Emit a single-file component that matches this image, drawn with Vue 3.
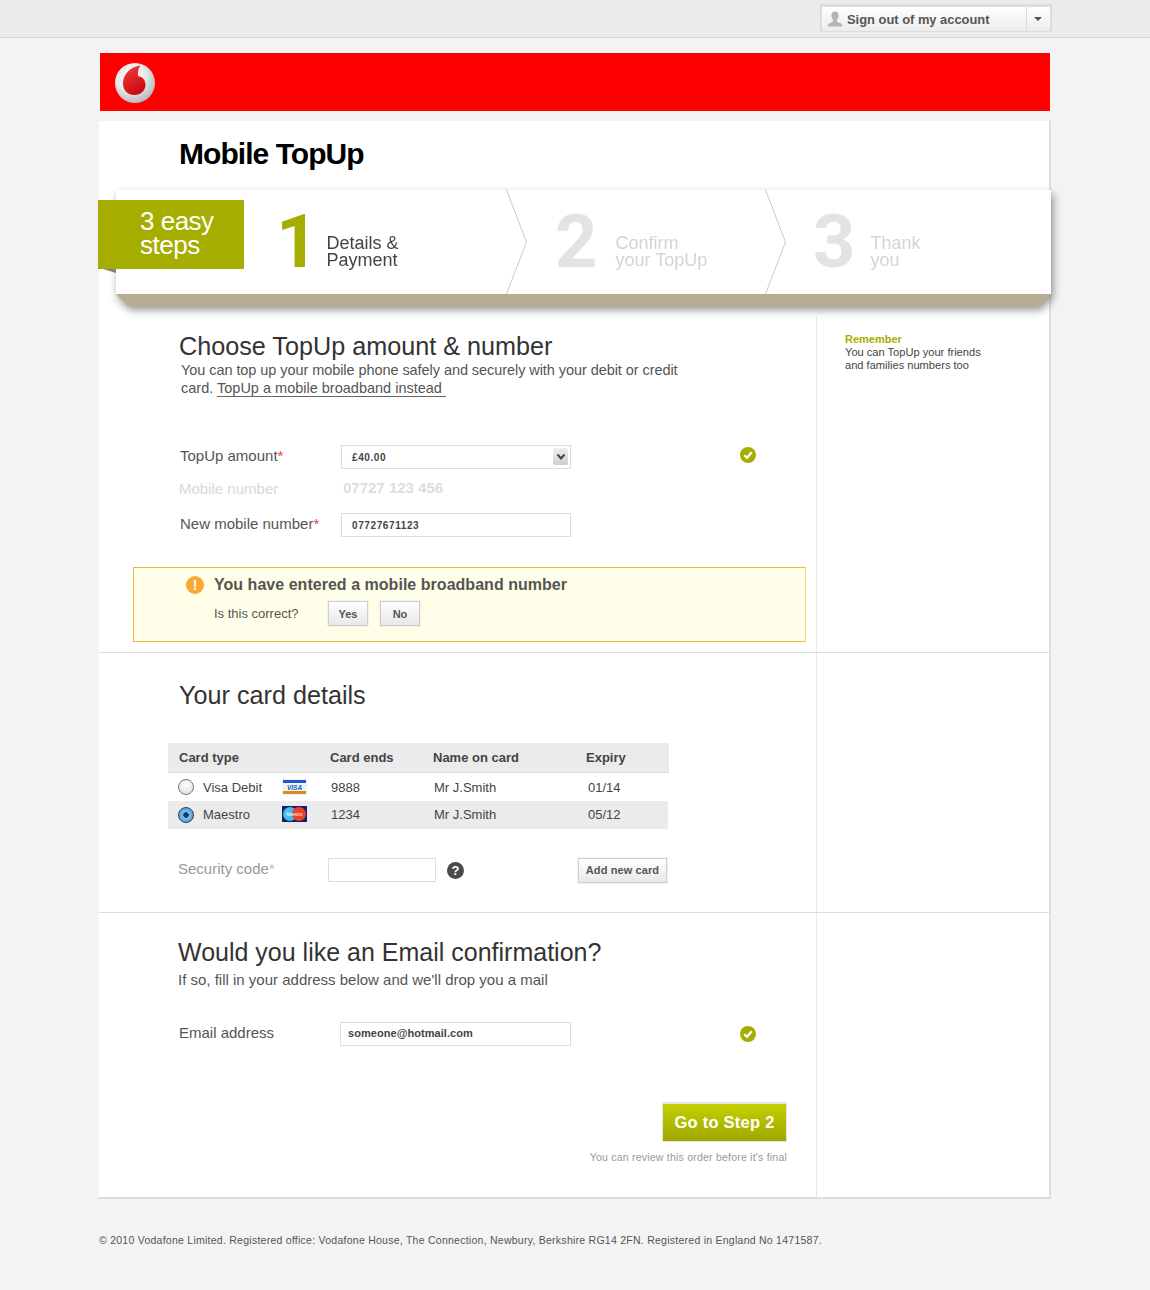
<template>
  <div class="page">
    <div class="topbar">
      <div class="account">
        <svg class="person" width="16" height="16" viewBox="0 0 16 16">
          <path d="M8 0.5c2.3 0 3.6 1.7 3.6 4 0 1.7-.7 3.3-1.700 4.2v1.300c0 .8 1.200 1.200 2.700 1.800 1.500.6 2.600 1.200 2.900 3.700H.5c.3-2.500 1.400-3.100 2.900-3.700 1.500-.6 2.700-1 2.700-1.800V8.700C5.100 7.800 4.400 6.200 4.400 4.500c0-2.300 1.300-4 3.600-4z" fill="#b4b4b4" />
        </svg>
        <span class="account-label">Sign out of my account</span>
        <span class="account-arrow"><i></i></span>
      </div>
    </div>

    <div class="brand">
      <svg width="40" height="40" viewBox="0 0 40 40">
        <defs>
          <radialGradient id="disc" cx="40%" cy="35%" r="68%">
            <stop offset="0" stop-color="#ffffff" />
            <stop offset="0.55" stop-color="#e8e8ea" />
            <stop offset="1" stop-color="#b4b5bb" />
          </radialGradient>
          <linearGradient id="mark" x1="0.2" y1="0" x2="0.7" y2="1">
            <stop offset="0" stop-color="#f03a3a" />
            <stop offset="1" stop-color="#c8060f" />
          </linearGradient>
        </defs>
        <circle cx="20" cy="20" r="20" fill="url(#disc)" />
        <path d="M25.5 2.600C15.500 3.800 8 11.500 8 20.500 8 27.500 13 32 19.500 32c6.300 0 11-4.600 11-10.300 0-4.800-3.100-8-7.500-8.700-.5-4.200.5-7.900 2.500-10.400z" fill="url(#mark)" />
      </svg>
    </div>

    <div class="card">
      <h1 class="title">Mobile TopUp</h1>

      <div class="stepper">
        <div class="stepper-body">
          <div class="step-face">
            <div v-for="s in steps" :key="s.num" class="step" :class="[s.cls, { active: s.active }]">
              <span class="step-num">{{ s.num }}</span>
              <span class="step-text">{{ s.line1 }}<br />{{ s.line2 }}</span>
              <svg v-if="s.chevron" class="chevron" width="22" height="104" viewBox="0 0 22 104">
                <path d="M0.5 0L20.5 52L0.5 104" fill="none" stroke="#c9c9c9" />
              </svg>
            </div>
          </div>
          <div class="step-depth"></div>
        </div>
        <div class="flag-fold"></div>
        <div class="flag">3 easy<br />steps</div>
      </div>

      <section class="row first">
        <div class="main">
          <h2 class="heading">Choose TopUp amount &amp; number</h2>
          <p class="intro">
            <span class="intro-line">You can top up your mobile phone safely and securely with your debit or credit</span><br />
            card. <a class="link">TopUp a mobile broadband instead</a>
          </p>

          <div class="field f-amount">
            <label>TopUp amount<em>*</em></label>
            <div class="input select">
              £40.00
              <span class="select-btn">
                <svg width="10" height="8" viewBox="0 0 10 8"><path d="M1.500 1.500L5 5.500L8.500 1.500" fill="none" stroke="#444" stroke-width="2" /></svg>
              </span>
            </div>
            <svg class="tick" width="16" height="16" viewBox="0 0 16 16">
              <circle cx="8" cy="8" r="8" fill="#a5ae00" />
              <path d="M4.300 8.300L7 10.800L11.700 5.300" fill="none" stroke="#fff" stroke-width="2.200" />
            </svg>
          </div>
          <div class="field f-mobile">
            <label>Mobile number</label>
            <span class="static">07727 123 456</span>
          </div>
          <div class="field f-new">
            <label>New mobile number<em>*</em></label>
            <div class="input">07727671123</div>
          </div>

          <div class="alert">
            <div class="alert-head">
              <span class="alert-icon">!</span>
              <strong>You have entered a mobile broadband number</strong>
            </div>
            <div class="alert-body">
              <span class="alert-q">Is this correct?</span>
              <button class="btn">Yes</button>
              <button class="btn">No</button>
            </div>
          </div>
        </div>
        <aside class="side">
          <div class="side-title">Remember</div>
          <div class="side-text">You can TopUp your friends<br />and families numbers too</div>
        </aside>
      </section>

      <section class="row second">
        <div class="main">
          <h2 class="heading">Your card details</h2>
          <div class="cards">
            <div class="cards-row cards-head">
              <span>Card type</span><span>Card ends</span><span>Name on card</span><span>Expiry</span>
            </div>
            <div v-for="c in cards" :key="c.ends" class="cards-row cards-item" :class="{ picked: c.picked }">
              <span class="card-type">
                <i class="radio" :class="{ on: c.picked }"></i>
                <span class="card-name">{{ c.type }}</span>
                <svg v-if="c.logo === 'visa'" width="25" height="16" viewBox="0 0 25 16">
                  <rect width="25" height="16" fill="#eef2fb" />
                  <rect x="1" y="1" width="23" height="3" fill="#2357c5" />
                  <rect x="1" y="12" width="23" height="3" fill="#dd8c12" />
                  <text x="12.5" y="10.5" class="visa-text">VISA</text>
                </svg>
                <svg v-else width="25" height="16" viewBox="0 0 25 16">
                  <rect width="25" height="16" fill="#1c1a6b" />
                  <circle cx="8" cy="8" r="7" fill="#3fc0ea" />
                  <circle cx="17" cy="8" r="7" fill="#ec4226" />
                  <text x="12.5" y="9.5" class="maestro-text">Maestro</text>
                </svg>
              </span>
              <span class="c-ends">{{ c.ends }}</span>
              <span class="c-name">{{ c.name }}</span>
              <span class="c-exp">{{ c.expiry }}</span>
            </div>
          </div>
          <div class="security">
            <label>Security code<em>*</em></label>
            <div class="input code"></div>
            <span class="help">?</span>
            <button class="btn add">Add new card</button>
          </div>
        </div>
        <aside class="side"></aside>
      </section>

      <section class="row third">
        <div class="main">
          <h2 class="heading">Would you like an Email confirmation?</h2>
          <p class="sub">If so, fill in your address below and we'll drop you a mail</p>
          <div class="field f-email">
            <label>Email address</label>
            <div class="input email">someone@hotmail.com</div>
            <svg class="tick" width="16" height="16" viewBox="0 0 16 16">
              <circle cx="8" cy="8" r="8" fill="#a5ae00" />
              <path d="M4.300 8.300L7 10.800L11.700 5.300" fill="none" stroke="#fff" stroke-width="2.200" />
            </svg>
          </div>
          <div class="submit">
            <button class="go">Go to Step 2</button>
            <div class="note">You can review this order before it's final</div>
          </div>
        </div>
        <aside class="side"></aside>
      </section>
    </div>

    <footer class="foot">© 2010 Vodafone Limited. Registered office: Vodafone House, The Connection, Newbury, Berkshire RG14 2FN. Registered in England No 1471587.</footer>
  </div>
</template>

<script setup>
const steps = [
  { num: '1', line1: 'Details &', line2: 'Payment', cls: 's1', active: true, chevron: true },
  { num: '2', line1: 'Confirm', line2: 'your TopUp', cls: 's2', chevron: true },
  { num: '3', line1: 'Thank', line2: 'you', cls: 's3' }
]

const cards = [
  { type: 'Visa Debit', logo: 'visa', ends: '9888', name: 'Mr J.Smith', expiry: '01/14' },
  { type: 'Maestro', logo: 'maestro', ends: '1234', name: 'Mr J.Smith', expiry: '05/12', picked: true }
]
</script>

<style>
html, body { background: #f3f3f3; }
</style>

<style scoped>
.page {
  width: 1150px;
  height: 1290px;
  overflow: hidden;
  font-family: "Liberation Sans", Arial, sans-serif;
  color: #555;
}
.topbar {
  height: 37px;
  background: #ebebeb;
  border-bottom: 1px solid #d6d6d6;
  position: relative;
}
.account {
  position: absolute;
  left: 820px;
  top: 4px;
  width: 232px;
  height: 28px;
  box-sizing: border-box;
  border: 2px solid #dcdcdc;
  border-top-width: 3px;
  border-bottom-width: 1px;
  display: flex;
  align-items: center;
  background: linear-gradient(#ffffff, #ececec);
}
.person { margin-left: 5px; }
.account-label {
  margin-left: 4px;
  font-size: 12.9px;
  font-weight: bold;
  color: #555;
  flex: 1;
}
.account-arrow {
  width: 24px;
  height: 100%;
  padding-right: 2px;
  box-sizing: border-box;
  border-left: 1px solid #dcdcdc;
  display: flex;
  align-items: center;
  justify-content: center;
}
.account-arrow i {
  width: 0;
  height: 0;
  border: 4px solid transparent;
  border-top: 4px solid #555;
  border-bottom: 0;
}
.brand {
  margin: 15px 0 0 100px;
  width: 950px;
  height: 58px;
  background: #ff0000;
  box-sizing: border-box;
  padding: 10px 0 0 15px;
}
.brand svg { display: block; }
.card {
  margin: 10px 0 0 99px;
  width: 952px;
  box-sizing: border-box;
  background: #fff;
  border-right: 2px solid #dedede;
  border-bottom: 2px solid #dedede;
  padding-top: 15px;
}
.title {
  margin: 0 0 0 80px;
  font-size: 30px;
  line-height: 36px;
  font-weight: bold;
  letter-spacing: -0.95px;
  color: #000;
}
.stepper {
  position: relative;
  margin: 18px 0 0 17px;
  width: 935px;
}
.stepper-body { filter: drop-shadow(2px 4px 4px rgba(0, 0, 0, 0.42)); }
.step-face {
  display: flex;
  height: 104px;
  background: #fff;
}
.step-depth {
  height: 12px;
  background: #b8ad93;
  clip-path: polygon(0 0, 100% 0, calc(100% - 12px) 100%, 12px 100%);
}
.flag {
  position: absolute;
  z-index: 2;
  left: -18px;
  top: 10px;
  width: 146px;
  height: 69px;
  box-sizing: border-box;
  padding: 9px 0 0 42px;
  background: #a5ae00;
  color: #fff;
  font-size: 26px;
  line-height: 24px;
  letter-spacing: -0.5px;
}
.flag-fold {
  position: absolute;
  left: -13px;
  top: 79px;
  width: 13px;
  height: 4px;
  background: #8a8170;
  clip-path: polygon(0 0, 100% 0, 100% 100%);
}
.step {
  position: relative;
  display: flex;
  align-items: flex-end;
  padding-bottom: 26px;
  box-sizing: border-box;
  color: #d4d4d4;
}
.s1 { width: 390px; padding-left: 160px; }
.s2 { width: 259px; padding-left: 49px; }
.s3 { width: 286px; padding-left: 48px; }
.step-num {
  font-family: Roboto, "Liberation Sans", sans-serif;
  font-size: 74px;
  line-height: 53px;
  height: 53px;
  font-weight: bold;
  color: #e2e3e5;
}
.active .step-num { color: #a5ae00; }
.step-text {
  font-size: 18px;
  line-height: 17px;
  margin-left: 18px;
  margin-bottom: -1px;
}
.s1 .step-text { margin-left: 8px; }
.s3 .step-text { margin-left: 15px; }
.active .step-text { color: #444; }
.chevron {
  position: absolute;
  left: 100%;
  top: 0;
  z-index: 1;
}
.row {
  display: grid;
  grid-template-columns: 717px 1fr;
  border-bottom: 1px solid #dcdcdc;
  box-sizing: border-box;
}
.row.first { margin-top: 11px; height: 336px; }
.row.second { height: 260px; }
.row.third { border-bottom: 0; height: 284px; }
.side { border-left: 1px solid #e8e8e8; padding: 16px 0 0 28px; }
.side-title { font-size: 11px; line-height: 13px; font-weight: bold; color: #a5ae00; }
.side-text { font-size: 11.1px; line-height: 13px; color: #444; }
.heading {
  margin: 0;
  font-size: 25.2px;
  line-height: 30px;
  font-weight: normal;
  color: #333;
}
.first .main { padding: 14px 0 0 0; }
.first .heading { margin-left: 80px; }
.intro {
  margin: 0 0 0 82px;
  font-size: 14.5px;
  line-height: 18px;
  color: #555;
}
.intro-line { letter-spacing: -0.065px; }
.link {
  color: #555;
  border-bottom: 1px solid #666;
  padding-right: 4px;
}
.field { display: flex; align-items: center; position: relative; }
.field label {
  width: 161px;
  margin-left: 81px;
  flex: none;
  font-size: 15px;
  color: #555;
  margin-top: -4px;
}
em { color: #f23b3b; font-style: normal; }
.input {
  width: 230px;
  height: 24px;
  box-sizing: border-box;
  border: 1px solid #dcdcdc;
  background: #fff;
  padding-left: 10px;
  font-size: 10px;
  line-height: 24px;
  font-weight: bold;
  color: #444;
  letter-spacing: 0.6px;
  position: relative;
}
.select-btn {
  position: absolute;
  right: 2px;
  top: 2px;
  width: 15px;
  height: 17px;
  background: linear-gradient(#efefef, #cfcfcf);
  border-radius: 2px;
  display: flex;
  align-items: center;
  justify-content: center;
}
.tick { margin-left: 169px; }
.f-amount { margin-top: 48px; }
.f-amount .tick { margin-top: -4px; }
.f-mobile { margin-top: 10px; height: 19px; }
.f-mobile label { color: #d8d8d8; margin-left: 80px; width: 164px; margin-top: 0; }
.static { font-size: 15px; font-weight: bold; color: #dddddd; margin-top: -2px; }
.f-new { margin-top: 15px; }
.alert {
  margin: 30px 0 0 34px;
  width: 673px;
  height: 75px;
  box-sizing: border-box;
  background: #ffffe9;
  border: 1px solid #f4b23e;
  border-right-color: #fbd385;
  padding: 7px 0 0 52px;
}
.alert-head {
  display: flex;
  align-items: center;
  font-size: 16px;
  line-height: 19px;
  letter-spacing: 0.03px;
  color: #555;
}
.alert-icon {
  width: 18px;
  height: 18px;
  border-radius: 50%;
  background: #f9a92f;
  color: #fff;
  font-size: 14px;
  font-weight: bold;
  line-height: 18px;
  text-align: center;
  margin-right: 10px;
}
.alert-body { display: flex; align-items: center; margin: 7px 0 0 28px; }
.alert-q { font-size: 13px; color: #555; width: 114px; }
.btn {
  height: 25px;
  padding: 0;
  background: linear-gradient(#ffffff, #e8e8e8);
  border: 1px solid #cfcfcf;
  outline: 1px solid rgba(0, 0, 0, 0.05);
  font-family: inherit;
  font-size: 11px;
  font-weight: bold;
  color: #555;
}
.alert .btn { width: 40px; margin-right: 12px; }
.second .main { padding-top: 27px; }
.second .heading { margin-left: 80px; }
.cards { margin: 33px 0 0 69px; width: 501px; }
.cards-row {
  display: grid;
  grid-template-columns: 151px 103px 153px 1fr;
  align-items: center;
  padding-left: 11px;
}
.cards-head {
  height: 30px;
  box-sizing: border-box;
  background: #ebebeb;
  border-bottom: 1px solid #dcdcdc;
  font-size: 13px;
  font-weight: bold;
  color: #444;
}
.cards-item { height: 28px; font-size: 13px; color: #444; }
.cards-item.picked { background: #ebebeb; width: 489px; }
.picked .card-name, .picked .c-ends, .picked .c-name, .picked .c-exp { margin-bottom: 2px; }
.picked svg { margin-bottom: 2px; }
.card-type { display: flex; align-items: center; margin-left: -1px; }
.card-type svg { display: block; }
.radio {
  width: 14px;
  height: 14px;
  border-radius: 50%;
  border: 1px solid #777;
  background: radial-gradient(circle at 50% 35%, #fff, #d8d8d8);
  margin-right: 9px;
  flex: none;
}
.radio.on {
  border-color: #1f3f66;
  background: radial-gradient(circle, #173a5c 0 2.5px, #7cc0ee 3px, #3d8fd0 100%);
}
.card-name { width: 79px; flex: none; }
.c-ends { margin-left: 1px; }
.c-name { margin-left: 1px; }
.c-exp { margin-left: 2px; }
.visa-text {
  font: italic bold 6.5px "Liberation Sans", Arial, sans-serif;
  fill: #2357c5;
  text-anchor: middle;
}
.maestro-text {
  font: 4.5px "Liberation Sans", Arial, sans-serif;
  fill: #fff;
  text-anchor: middle;
}
.security { display: flex; align-items: center; margin: 28px 0 0 79px; height: 26px; }
.security label { width: 150px; flex: none; font-size: 15px; color: #999; margin-top: -4px; }
.security em { color: #f7a0a0; }
.input.code { width: 108px; }
.help {
  width: 17px;
  height: 17px;
  border-radius: 50%;
  background: #4a4a4a;
  color: #fff;
  font-size: 13px;
  font-weight: bold;
  line-height: 17px;
  text-align: center;
  margin: 1px 0 0 11px;
}
.btn.add { width: 89px; margin-left: 114px; letter-spacing: 0.1px; }
.third .main { padding-top: 24px; }
.third .heading { margin-left: 79px; font-size: 25px; }
.sub {
  margin: 4px 0 0 79px;
  font-size: 15px;
  line-height: 18px;
  color: #555;
}
.f-email { margin-top: 33px; }
.f-email label { margin-left: 80px; width: 161px; }
.input.email { width: 231px; padding-left: 7px; font-size: 11px; line-height: 21px; letter-spacing: 0.05px; }
.submit { margin: 57px 0 0 0; display: flex; flex-direction: column; align-items: flex-end; padding-right: 29px; }
.go {
  width: 125px;
  height: 39px;
  border: 1px solid #e6e6e6;
  box-shadow: 0 -1px 0 #e6e6e6;
  background: linear-gradient(#c4d000, #9fa600);
  color: #fff;
  font-family: inherit;
  font-size: 16.5px;
  font-weight: bold;
  letter-spacing: 0.25px;
  padding: 0;
}
.note { margin-top: 8px; font-size: 10.5px; line-height: 14px; color: #999; letter-spacing: 0.22px; }
.foot {
  margin: 34px 0 0 99px;
  font-size: 10.5px;
  line-height: 14px;
  color: #555;
  letter-spacing: 0.255px;
}
</style>
